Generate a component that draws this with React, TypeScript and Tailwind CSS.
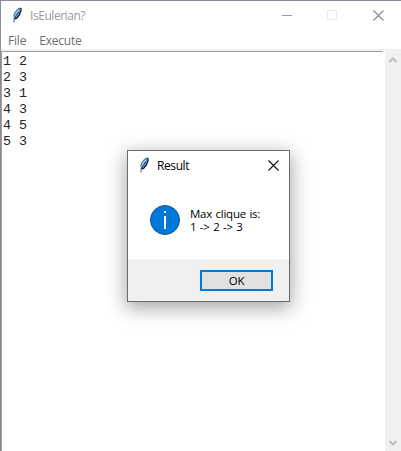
function Feather() {
  return (
    <svg width="12" height="16" viewBox="0 0 12 16" className="shrink-0">
      <path d="M10 .5 6.8 1.8 4 5.2 2.6 9.2l.3 2.8 2.6-.4 2.8-3.4 1.7-4.5z" fill="#5b9be0" />
      <path d="M9.6 1 6.6 2 4 5.3 2.6 9.2" stroke="#55585f" strokeWidth=".8" fill="none" />
      <path d="M7.8 2.8 5.3 6 4.2 9.5" stroke="#a5cdf5" strokeWidth="1.2" fill="none" />
      <path d="M10 1v3L8.4 8 5.6 11.4 3.4 12" stroke="#14171e" strokeWidth="1.2" fill="none" />
      <path d="M8 4.5 5 8.8 3 12.4V15.5" stroke="#14171e" strokeWidth=".7" fill="none" />
    </svg>
  );
}

function Close({ color }: { color: string }) {
  return (
    <svg width="11" height="11" viewBox="0 0 11 11" className="shrink-0">
      <path d="M.5.5l10 10M10.5.5l-10 10" stroke={color} strokeWidth="1.1" />
    </svg>
  );
}

function Chevron({ down = false }: { down?: boolean }) {
  return (
    <svg width="8" height="6" viewBox="0 0 8 6" className={down ? "rotate-180" : ""}>
      <path d="M.5 5 4 1.5 7.5 5" stroke="#bcbcbc" strokeWidth="2" fill="none" />
    </svg>
  );
}

function Dialog() {
  return (
    <div className="absolute left-[126px] top-[149px] flex h-[152px] w-[163px] flex-col border border-[#6b6b6b] bg-white text-black shadow-[0_5px_18px_1px_rgba(0,0,0,0.36)]">
      <div className="flex h-[30px] items-center pl-[10px] pr-[10px]">
        <div className="-mt-[3px]"><Feather /></div>
        <span className="ml-[7px] text-[12px] tracking-[-0.4px]">Result</span>
        <span className="ml-auto -mt-[2px]"><Close color="#111111" /></span>
      </div>
      <div className="flex h-[78px] pl-[22px] pt-[24px]">
        <svg width="30" height="30" viewBox="0 0 30 30">
          <circle cx="15" cy="15" r="14.5" fill="#0078d7" stroke="#0b5796" />
          <rect x="14" y="11" width="2" height="13" fill="#fff" />
          <rect x="14" y="6" width="2" height="2" fill="#fff" />
        </svg>
        <p className="ml-[10px] mt-[2px] whitespace-pre text-[11.5px] leading-[13px] tracking-[-0.25px] [word-spacing:0.8px]">{"Max clique is:\n1 -> 2 -> 3"}</p>
      </div>
      <div className="flex flex-1 items-start justify-end bg-[#f0f0f0] pr-[16px] pt-[11px]">
        <button className="flex h-[21px] w-[73px] items-center justify-center border-2 border-[#0078d7] bg-[#e1e1e1] text-[11.5px] leading-none tracking-[-0.3px]">OK</button>
      </div>
    </div>
  );
}

export default function App() {
  return (
    <div className="relative flex h-[451px] w-[401px] flex-col overflow-hidden border-l border-t border-[#8b8c9b] bg-white font-['Open_Sans',sans-serif]">
      <div className="flex h-[29px] shrink-0 items-center pl-[10px] pr-[17px]">
        <div className="-mt-px"><Feather /></div>
        <span className="ml-[7px] text-[12px] tracking-[-0.45px] text-[#999999]">IsEulerian?</span>
        <div className="ml-auto flex items-center">
          <div className="h-px w-[10px] bg-[#999999]" />
          <div className="-mt-px ml-[35px] h-[10px] w-[10px] border border-[#e8e8e8]" />
          <div className="-mt-px ml-[36px]"><Close color="#888888" /></div>
        </div>
      </div>
      <div className="flex h-[19px] shrink-0 items-center gap-[13px] pl-[7px] pt-[2px] text-[12px] tracking-[-0.2px] text-[#6d6d6d]">
        <span>File</span>
        <span>Execute</span>
      </div>
      <div className="h-[2px] shrink-0 bg-[#f0f0f0]" />
      <div className="flex min-h-0 flex-1">
        <div className="w-[382px] border-l border-t border-[#a0a0a0] pl-px pt-[2px]">
          <pre className="font-['Liberation_Mono',monospace] text-[13.333px] leading-[16px] text-[#222222]">{"1 2\n2 3\n3 1\n4 3\n4 5\n5 3"}</pre>
        </div>
        <div className="ml-[2px] flex flex-1 flex-col items-center justify-between bg-[#f0f0f0] pb-[5px] pr-px pt-[6px]">
          <Chevron />
          <Chevron down />
        </div>
      </div>
      <Dialog />
    </div>
  );
}
